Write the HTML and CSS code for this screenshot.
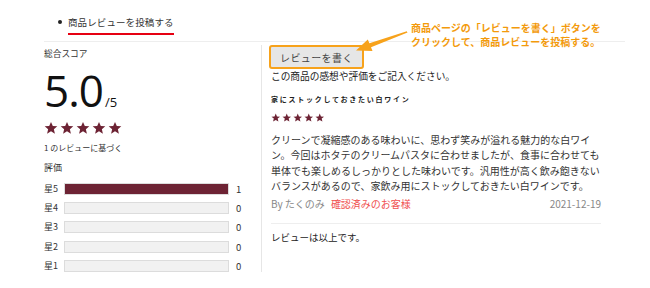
FILE: index.html
```html
<!DOCTYPE html>
<html lang="ja">
<head>
<meta charset="utf-8">
<title>商品レビュー</title>
<link rel="stylesheet" href="styles.css">
</head>
<body>
<div class="page">
  <div class="tabs">
    <div class="tab">
      <span class="dot"></span>
      <span class="tab-label">商品レビューを投稿する</span>
    </div>
  </div>
  <div class="main">
    <div class="summary">
      <div class="caption">総合スコア</div>
      <div class="score"><span class="score-num">5.0</span><span class="score-max">/5</span></div>
      <div class="stars big">
        <svg viewBox="0 0 24 24"><path d="M12 1.5l3.1 7.1 7.7.6-5.9 5 1.8 7.5L12 17.7l-6.7 4 1.8-7.5-5.9-5 7.7-.6z"/></svg>
        <svg viewBox="0 0 24 24"><path d="M12 1.5l3.1 7.1 7.7.6-5.9 5 1.8 7.5L12 17.7l-6.7 4 1.8-7.5-5.9-5 7.7-.6z"/></svg>
        <svg viewBox="0 0 24 24"><path d="M12 1.5l3.1 7.1 7.7.6-5.9 5 1.8 7.5L12 17.7l-6.7 4 1.8-7.5-5.9-5 7.7-.6z"/></svg>
        <svg viewBox="0 0 24 24"><path d="M12 1.5l3.1 7.1 7.7.6-5.9 5 1.8 7.5L12 17.7l-6.7 4 1.8-7.5-5.9-5 7.7-.6z"/></svg>
        <svg viewBox="0 0 24 24"><path d="M12 1.5l3.1 7.1 7.7.6-5.9 5 1.8 7.5L12 17.7l-6.7 4 1.8-7.5-5.9-5 7.7-.6z"/></svg>
      </div>
      <div class="based">1 のレビューに基づく</div>
      <div class="rating-title">評価</div>
      <div class="bars">
        <span class="bar-label">星5</span><span class="bar"><span class="bar-fill" style="width:100%"></span></span><span class="bar-count">1</span>
        <span class="bar-label">星4</span><span class="bar"><span class="bar-fill" style="width:0%"></span></span><span class="bar-count">0</span>
        <span class="bar-label">星3</span><span class="bar"><span class="bar-fill" style="width:0%"></span></span><span class="bar-count">0</span>
        <span class="bar-label">星2</span><span class="bar"><span class="bar-fill" style="width:0%"></span></span><span class="bar-count">0</span>
        <span class="bar-label">星1</span><span class="bar"><span class="bar-fill" style="width:0%"></span></span><span class="bar-count">0</span>
      </div>
    </div>
    <div class="reviews">
      <button class="write-btn" type="button">レビューを書く</button>
      <div class="prompt">この商品の感想や評価をご記入ください。</div>
      <div class="review-title">家にストックしておきたい白ワイン</div>
      <div class="stars small">
        <svg viewBox="0 0 24 24"><path d="M12 1.5l3.1 7.1 7.7.6-5.9 5 1.8 7.5L12 17.7l-6.7 4 1.8-7.5-5.9-5 7.7-.6z"/></svg>
        <svg viewBox="0 0 24 24"><path d="M12 1.5l3.1 7.1 7.7.6-5.9 5 1.8 7.5L12 17.7l-6.7 4 1.8-7.5-5.9-5 7.7-.6z"/></svg>
        <svg viewBox="0 0 24 24"><path d="M12 1.5l3.1 7.1 7.7.6-5.9 5 1.8 7.5L12 17.7l-6.7 4 1.8-7.5-5.9-5 7.7-.6z"/></svg>
        <svg viewBox="0 0 24 24"><path d="M12 1.5l3.1 7.1 7.7.6-5.9 5 1.8 7.5L12 17.7l-6.7 4 1.8-7.5-5.9-5 7.7-.6z"/></svg>
        <svg viewBox="0 0 24 24"><path d="M12 1.5l3.1 7.1 7.7.6-5.9 5 1.8 7.5L12 17.7l-6.7 4 1.8-7.5-5.9-5 7.7-.6z"/></svg>
      </div>
      <p class="review-body">クリーンで凝縮感のある味わいに、思わず笑みが溢れる魅力的な白ワイン。今回はホタテのクリームパスタに合わせましたが、食事に合わせても単体でも楽しめるしっかりとした味わいです。汎用性が高く飲み飽きないバランスがあるので、家飲み用にストックしておきたい白ワインです。</p>
      <div class="review-meta">
        <span class="author">By たくのみ</span>
        <span class="verified">確認済みのお客様</span>
        <span class="date">2021-12-19</span>
      </div>
      <div class="end-note">レビューは以上です。</div>
    </div>
  </div>
</div>

<div class="callout">商品ページの「レビューを書く」ボタンを<br>クリックして、商品レビューを投稿する。</div>
<svg class="callout-arrow" viewBox="0 0 650 288" width="650" height="288">
  <polygon points="356,50.5 372.5,51 371,47.2 407.5,32.6 406.8,31.2 369.4,43.2 367.8,39.4"/>
</svg>
</body>
</html>
```

FILE: styles.css
```css
* { box-sizing: border-box; }

html, body {
  margin: 0;
  padding: 0;
  background: #ffffff;
}

body {
  width: 650px;
  height: 288px;
  position: relative;
  overflow: hidden;
  font-family: "Noto Sans CJK JP", "Noto Sans", sans-serif;
  color: #333;
}

.page {
  margin: 0 25px 0 44px;
}

/* tabs */
.tabs {
  height: 42px;
  padding: 15px 0 0 14px;
  border-bottom: 1px solid #eeeeee;
}

.tab {
  display: flex;
  align-items: flex-start;
  gap: 6px;
}

.dot {
  width: 4px;
  height: 4px;
  border-radius: 50%;
  background: #222;
  margin-top: 5px;
}

.tab-label {
  font-size: 9.5px;
  line-height: 14px;
  color: #333;
  padding-bottom: 4px;
  border-bottom: 2px solid #e60012;
  letter-spacing: 0.1px;
}

/* main */
.main {
  display: flex;
  margin-top: 3px;
}

.summary {
  width: 217px;
  display: flex;
  flex-direction: column;
}

.caption {
  margin-top: 2px;
  font-size: 8.7px;
  line-height: 14px;
  color: #333;
}

.score {
  margin-top: 7px;
  height: 44px;
  line-height: 44px;
  color: #111;
}

.score-num {
  font-family: "Open Sans", "Liberation Sans", sans-serif;
  font-size: 44px;
  font-weight: 400;
  letter-spacing: -1px;
}

.score-max {
  font-family: "Open Sans", "Liberation Sans", sans-serif;
  font-size: 13px;
  margin-left: 2px;
}

.stars {
  display: flex;
}

.stars svg {
  fill: #6d2334;
  display: block;
}

.stars.big {
  margin-top: 9px;
  gap: 2px;
}

.stars.big svg {
  width: 14px;
  height: 14px;
}

.based {
  margin-top: 7px;
  font-size: 8px;
  line-height: 12px;
  color: #333;
}

.rating-title {
  margin-top: 8px;
  font-size: 9px;
  line-height: 12px;
  color: #333;
}

.bars {
  margin-top: 9px;
  display: grid;
  grid-template-columns: 20px 165px auto;
  grid-auto-rows: 12px;
  row-gap: 7.2px;
  column-gap: 0;
  align-items: center;
}

.bar-label {
  font-size: 9px;
  line-height: 12px;
  color: #333;
}

.bar {
  height: 12px;
  background: #f1f1f1;
  border: 1px solid #dcdcdc;
  display: block;
}

.bar-fill {
  display: block;
  height: 100%;
  background: #6d2334;
}

.bar-count {
  padding-left: 7px;
  font-size: 9.5px;
  line-height: 12px;
  color: #333;
}

/* reviews */
.reviews {
  border-left: 1px solid #e6e6e6;
  padding: 0 0 6px 9px;
  width: 340px;
  display: flex;
  flex-direction: column;
  align-items: flex-start;
}

.write-btn {
  margin: 0 0 0 -2px;
  height: 24px;
  padding: 0 9px;
  background: #e6e6e6;
  border: 2px solid #f7a21b;
  border-radius: 3px;
  font-family: "Noto Sans CJK JP", sans-serif;
  font-size: 10px;
  letter-spacing: 0.4px;
  color: #444;
}

.prompt {
  margin-top: 0;
  font-size: 9.7px;
  line-height: 14px;
  color: #222;
}

.review-title {
  margin-top: 11px;
  font-size: 7px;
  font-weight: 700;
  letter-spacing: 1.75px;
  line-height: 10px;
  color: #222;
}

.stars.small {
  margin-top: 9px;
  gap: 1.5px;
}

.stars.small svg {
  width: 9.5px;
  height: 9.5px;
}

.review-body {
  margin: 9px 0 0;
  width: 332px;
  font-size: 10px;
  line-height: 15.5px;
  color: #333;
}

.review-meta {
  margin-top: 3px;
  width: 330px;
  display: flex;
  align-items: center;
  font-size: 10px;
  line-height: 14px;
  padding-bottom: 12px;
  border-bottom: 1px solid #eeeeee;
}

.author {
  color: #888;
}

.verified {
  margin-left: 6px;
  color: #f05050;
}

.date {
  margin-left: auto;
  color: #888;
}

.end-note {
  margin-top: 6px;
  font-size: 9.5px;
  line-height: 14px;
  color: #222;
}

/* annotation overlay */
.callout {
  position: absolute;
  left: 411px;
  top: 21px;
  font-size: 10px;
  line-height: 14px;
  font-weight: 700;
  color: #f39a0b;
  white-space: nowrap;
}

.callout-arrow {
  position: absolute;
  left: 0;
  top: 0;
  fill: #f7a21b;
  pointer-events: none;
}
```
